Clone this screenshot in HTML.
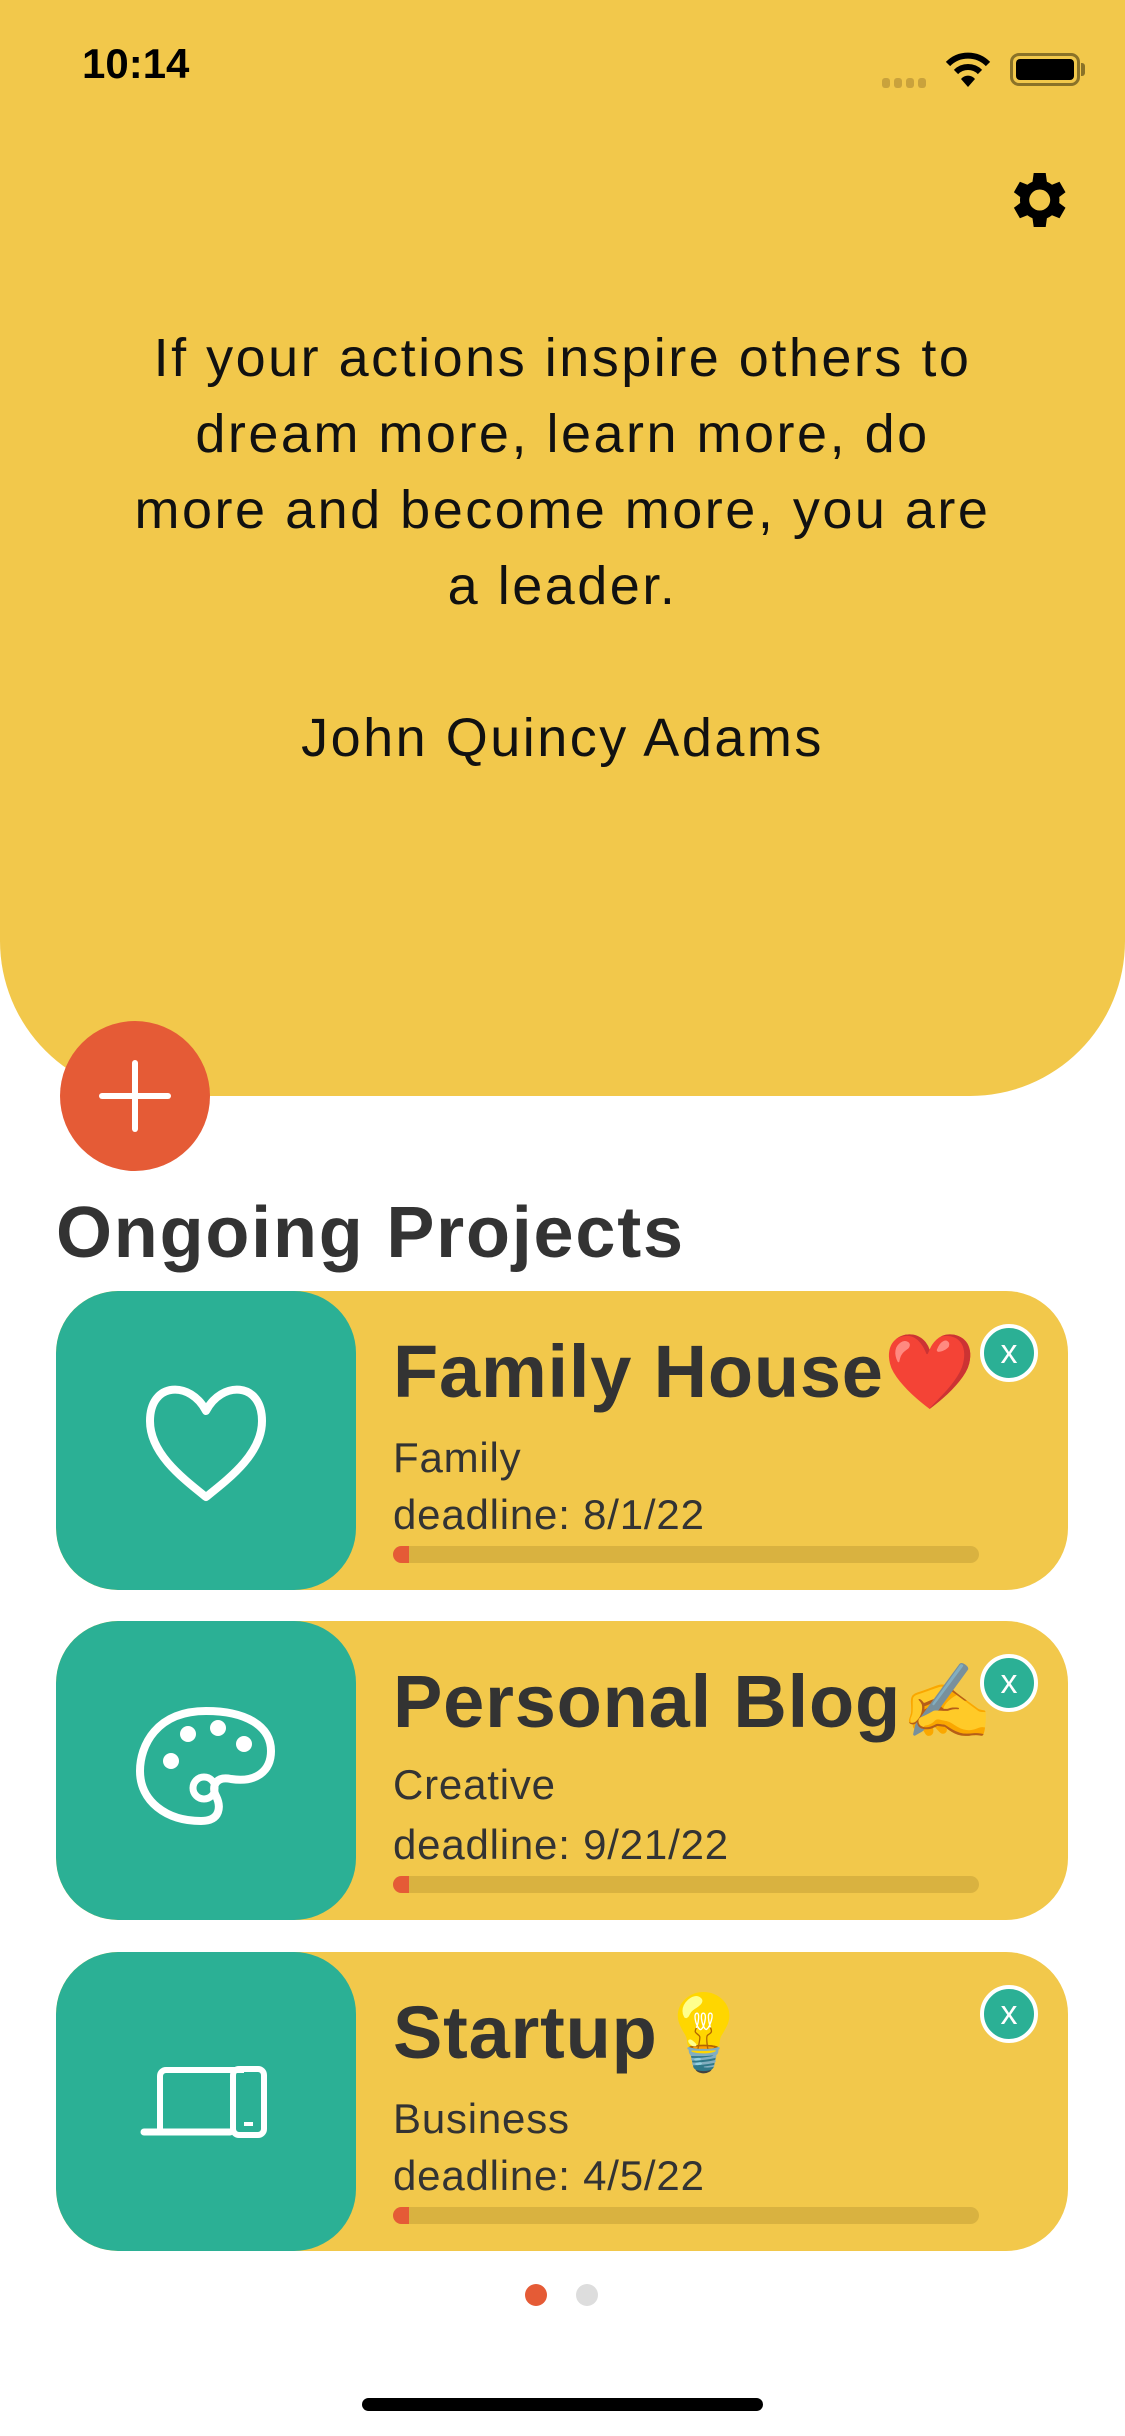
<!DOCTYPE html>
<html><head><meta charset="utf-8">
<style>
*{margin:0;padding:0;box-sizing:border-box}
body{width:1125px;height:2436px;background:#fff;position:relative;overflow:hidden;font-family:"Liberation Sans",sans-serif;color:#333}
.abs{position:absolute}
.hdr{left:0;top:0;width:1125px;height:1096px;background:#F2C84B;border-radius:0 0 155px 155px}
.quote{left:0;width:1125px;text-align:center;font-size:54px;color:#111;line-height:76px;top:320px;letter-spacing:2.5px}
.card{left:56px;width:1012px;height:299px;background:#F2C84B;border-radius:62px;overflow:hidden}
.teal{position:absolute;left:0;top:0;width:300px;height:299px;background:#2BB095;border-radius:62px}
.title{position:absolute;left:337px;top:38px;font-size:74px;font-weight:bold;color:#333;white-space:nowrap;letter-spacing:0.8px}
.sub{position:absolute;left:337px;font-size:42px;color:#333;white-space:nowrap;letter-spacing:0.8px}
.bar{position:absolute;left:337px;top:255px;width:586px;height:17px;border-radius:9px;background:#D9B240;overflow:hidden}
.bar i{position:absolute;left:0;top:0;width:16px;height:17px;background:#E55B36}
.x{position:absolute;left:924px;top:33px;width:58px;height:58px;border-radius:50%;background:#2BB095;border:4px solid #fff;color:#fff;font-size:34px;text-align:center;line-height:48px}
.ic{position:absolute;left:0;top:0;width:300px;height:299px}
</style></head><body>
<div class="abs hdr"></div>
<div class="abs" style="left:82px;top:40px;font-size:42px;font-weight:bold;color:#000">10:14</div>
<div class="abs" style="left:882px;top:75px">
 <span style="display:inline-block;width:8px;height:10px;background:#c9a23c;border-radius:3px;margin-right:4px"></span><span style="display:inline-block;width:8px;height:10px;background:#c9a23c;border-radius:3px;margin-right:4px"></span><span style="display:inline-block;width:8px;height:10px;background:#c9a23c;border-radius:3px;margin-right:4px"></span><span style="display:inline-block;width:8px;height:10px;background:#c9a23c;border-radius:3px"></span>
</div>
<svg class="abs" style="left:945px;top:50px" width="46" height="38" viewBox="0 0 46 38"><path d="M3 14 A28 28 0 0 1 43 14" stroke="#000" stroke-width="6" fill="none"/><path d="M11 22 A17 17 0 0 1 35 22" stroke="#000" stroke-width="6" fill="none"/><path d="M23 37 L16 29 A9 9 0 0 1 30 29 Z" fill="#000"/></svg>
<div class="abs" style="left:1010px;top:53px;width:70px;height:33px;border:3px solid #8a7228;border-radius:9px;padding:3px"><div style="width:100%;height:100%;background:#000;border-radius:4px"></div></div>
<div class="abs" style="left:1081px;top:63px;width:4px;height:13px;background:#8a7228;border-radius:0 3px 3px 0"></div>
<svg class="abs" style="left:1001px;top:164px" width="72" height="72" viewBox="0 0 24 24"><path fill="#000" d="M19.4 13a7.5 7.5 0 0 0 0-2l2.1-1.6-2-3.5-2.5 1a7 7 0 0 0-1.7-1L14.9 3h-4l-.4 2.9a7 7 0 0 0-1.7 1l-2.5-1-2 3.5L6.4 11a7.5 7.5 0 0 0 0 2l-2.1 1.6 2 3.5 2.5-1a7 7 0 0 0 1.7 1l.4 2.9h4l.4-2.9a7 7 0 0 0 1.7-1l2.5 1 2-3.5zM12.9 15.5a3.5 3.5 0 1 1 0-7 3.5 3.5 0 0 1 0 7z"/></svg>
<div class="abs quote">If your actions inspire others to<br>dream more, learn more, do<br>more and become more, you are<br>a leader.<br><br>John Quincy Adams</div>
<div class="abs" style="left:60px;top:1021px;width:150px;height:150px;border-radius:50%;background:#E55B36"></div>
<div class="abs" style="left:132px;top:1060px;width:6px;height:72px;background:#fff;border-radius:3px"></div>
<div class="abs" style="left:99px;top:1093px;width:72px;height:6px;background:#fff;border-radius:3px"></div>
<div class="abs" style="left:56px;top:1192px;font-size:72px;font-weight:bold;color:#333;letter-spacing:1.8px">Ongoing Projects</div>

<div class="abs card" style="top:1291px"><div class="teal"></div>
<svg class="ic" viewBox="0 0 300 299"><path d="M150 120 C135 90 94 90 94 130 C94 162 125 186 150 206 C175 186 206 162 206 130 C206 90 165 90 150 120Z" fill="none" stroke="#fff" stroke-width="8" stroke-linejoin="round"/></svg>
<div class="title">Family House<span style="color:#e02020">❤️</span></div>
<div class="sub" style="top:143px">Family</div><div class="sub" style="top:200px">deadline: 8/1/22</div>
<div class="bar"><i></i></div><div class="x">x</div></div>

<div class="abs card" style="top:1621px"><div class="teal"></div>
<svg class="ic" viewBox="0 0 300 299"><path d="M150 90 C100 90 84 125 84 150 C84 180 110 200 145 200 C165 200 165 185 160 175 C155 165 160 155 175 158 C200 162 215 150 215 130 C215 105 190 90 150 90Z" fill="none" stroke="#fff" stroke-width="8" stroke-linejoin="round"/><circle cx="115" cy="140" r="8" fill="#fff"/><circle cx="132" cy="113" r="8" fill="#fff"/><circle cx="162" cy="107" r="8" fill="#fff"/><circle cx="188" cy="123" r="8" fill="#fff"/><circle cx="148" cy="167" r="11" fill="none" stroke="#fff" stroke-width="7"/></svg>
<div class="title">Personal Blog✍️</div>
<div class="sub" style="top:140px">Creative</div><div class="sub" style="top:200px">deadline: 9/21/22</div>
<div class="bar"><i></i></div><div class="x">x</div></div>

<div class="abs card" style="top:1952px"><div class="teal"></div>
<svg class="ic" viewBox="0 0 300 299"><path d="M104 178 V124 a6 6 0 0 1 6-6 h78" fill="none" stroke="#fff" stroke-width="6"/><path d="M88 180 h86" stroke="#fff" stroke-width="7" stroke-linecap="round"/><rect x="177" y="117" width="31" height="66" rx="6" fill="none" stroke="#fff" stroke-width="6"/><path d="M188 172 h9" stroke="#fff" stroke-width="4"/></svg>
<div class="title">Startup💡</div>
<div class="sub" style="top:143px">Business</div><div class="sub" style="top:200px">deadline: 4/5/22</div>
<div class="bar"><i></i></div><div class="x">x</div></div>

<div class="abs" style="left:525px;top:2284px;width:22px;height:22px;border-radius:50%;background:#E55B36"></div>
<div class="abs" style="left:576px;top:2284px;width:22px;height:22px;border-radius:50%;background:#ddd"></div>
<div class="abs" style="left:362px;top:2398px;width:401px;height:13px;border-radius:7px;background:#000"></div>
</body></html>
